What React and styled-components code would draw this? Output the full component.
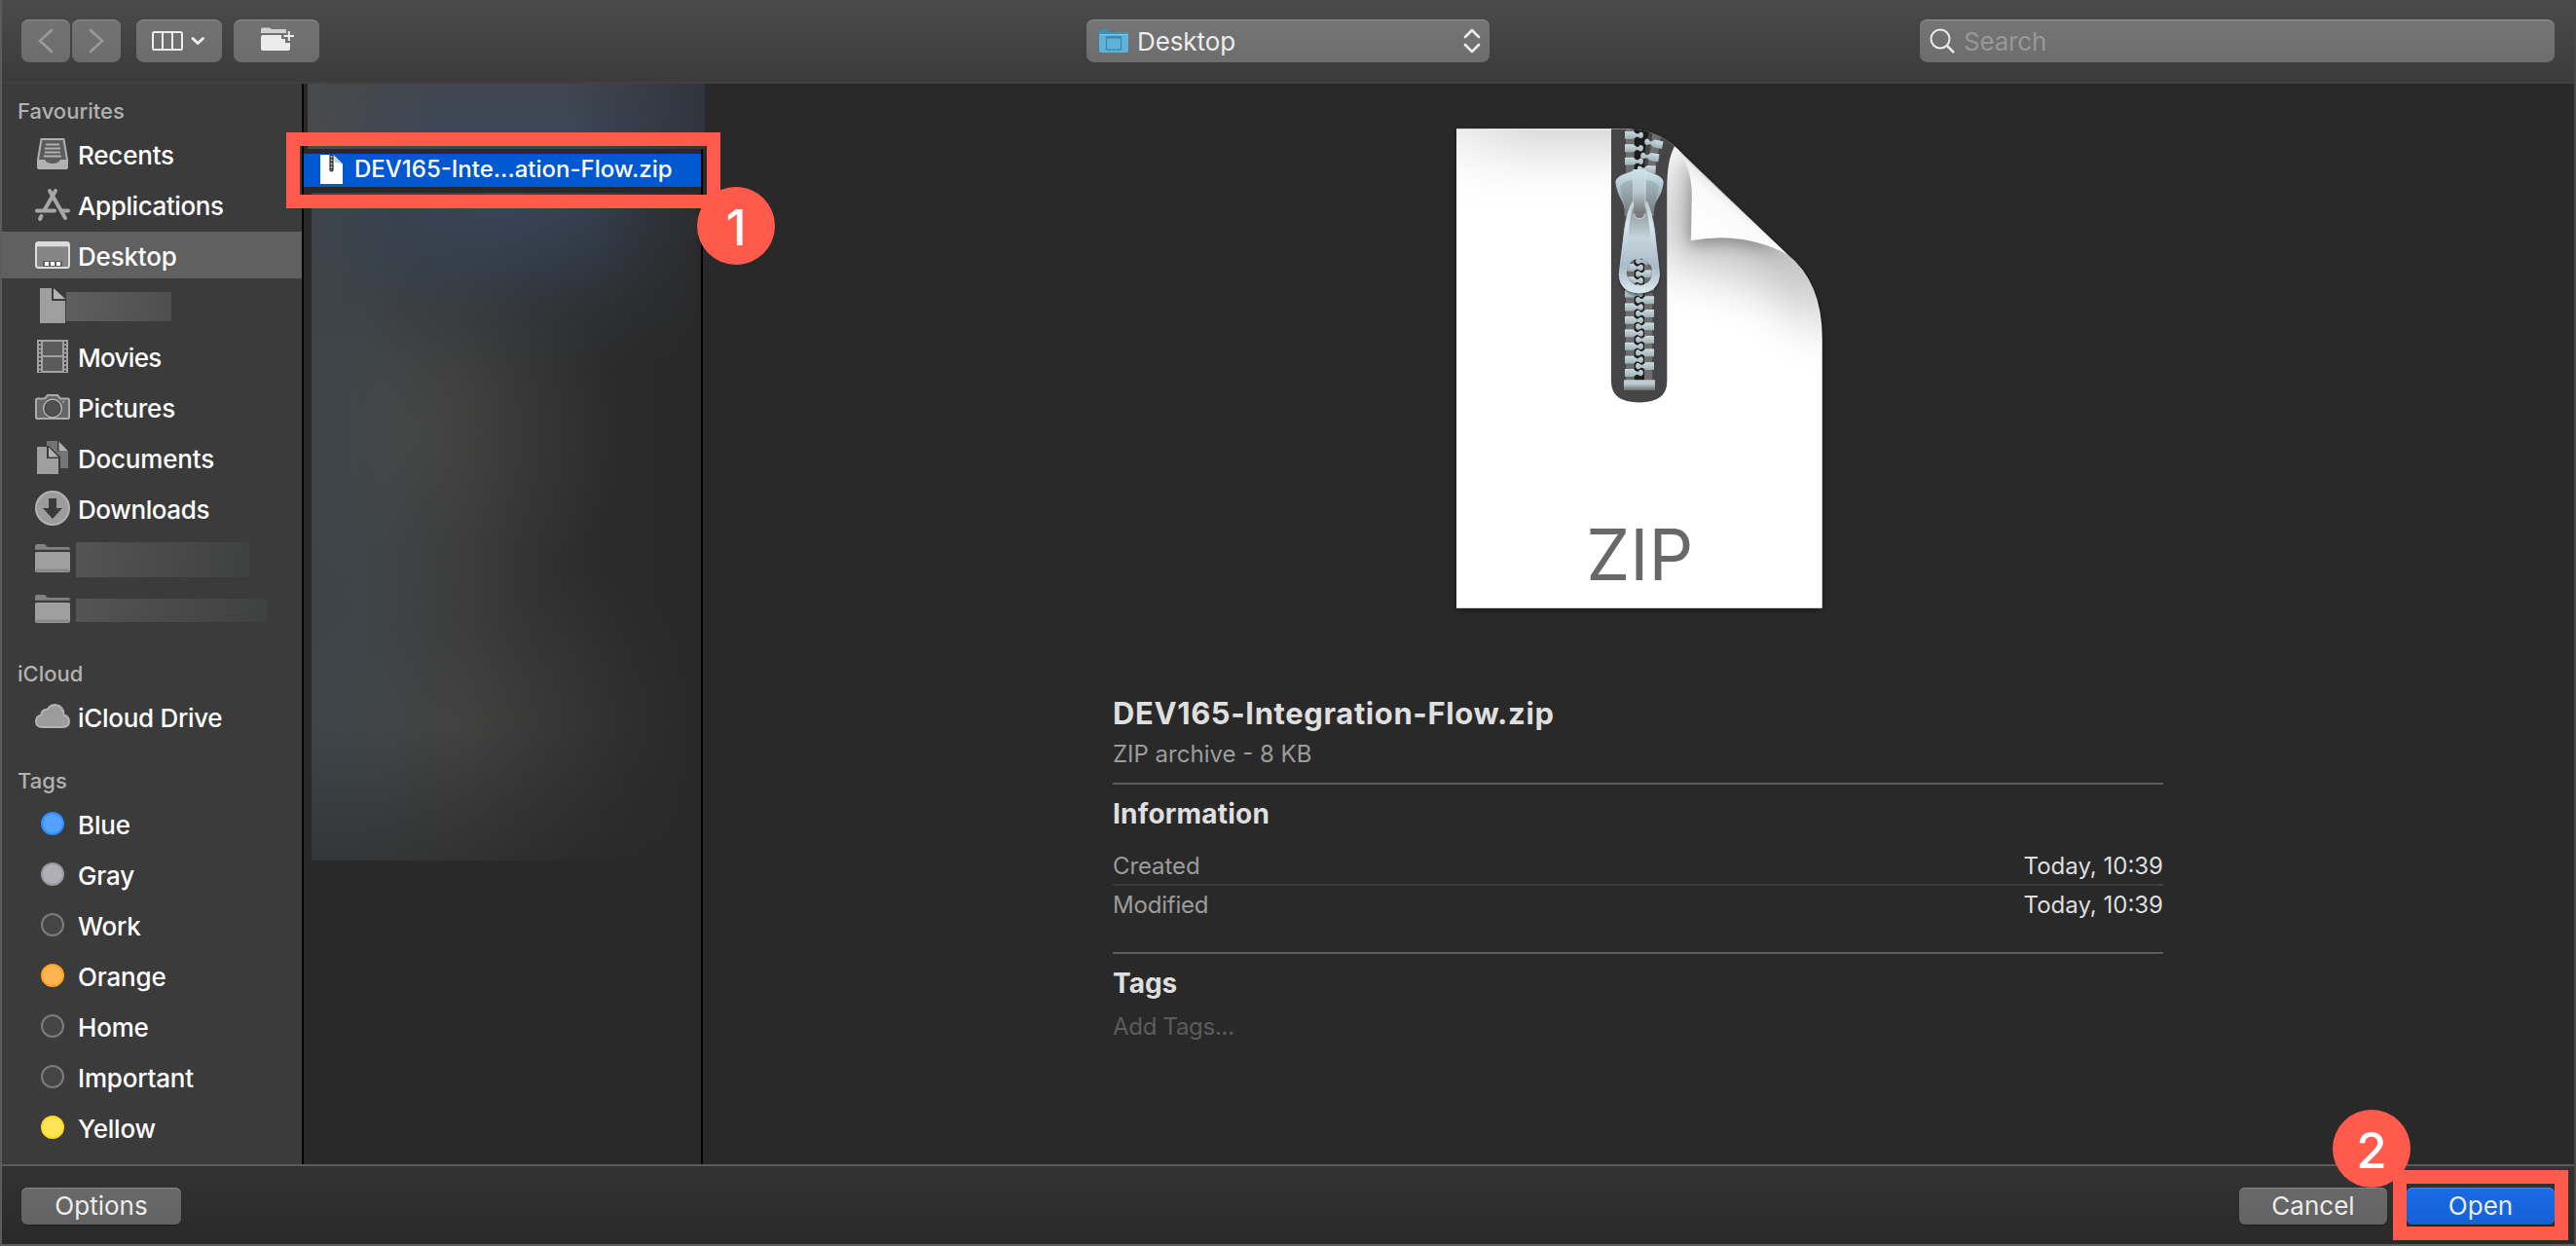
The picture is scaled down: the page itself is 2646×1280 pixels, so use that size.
import React from "react";
import styled, { createGlobalStyle } from "styled-components";

const Global = createGlobalStyle`
  *, *::before, *::after { box-sizing: border-box; }
  body { margin: 0; background: #292929; }
`;

const FONT = '"Inter", "Liberation Sans", sans-serif';

const Dialog = styled.div`
  position: relative;
  width: 2646px;
  height: 1280px;
  overflow: hidden;
  display: flex;
  flex-direction: column;
  background: #292929;
  border: solid #5c5c5c;
  border-width: 0 2px 2px 2px;
  border-right-color: #484848;
  font-family: ${FONT};
  color: #fff;
`;

const Toolbar = styled.header`
  flex: none;
  display: flex;
  height: 86px;
  padding: 20px 20px 20px;
  background: linear-gradient(#4b4b4b, #3b3b3b);
  border-bottom: 2px solid #414141;
`;

const ToolButton = styled.button`
  display: flex;
  align-items: center;
  justify-content: center;
  width: ${(p) => p.$w}px;
  height: 44px;
  margin: 0 ${(p) => p.$gap || 0}px 0 0;
  padding: 0;
  border: 0;
  border-radius: 8px;
  background: linear-gradient(#737373, #6c6c6c);
  box-shadow: inset 0 1px 0 #8a8a8a;
`;

const LocationSelect = styled.div`
  display: flex;
  align-items: center;
  width: 414px;
  height: 44px;
  margin-left: 788px;
  padding: 0 9px 0 13px;
  border-radius: 8px;
  background: linear-gradient(#757575, #6d6d6d);
  box-shadow: inset 0 1px 0 #929292;
`;

const SelectLabel = styled.span`
  flex: 1;
  margin-left: 8px;
  padding-top: 2px;
  font-size: 26px;
  line-height: 42px;
  letter-spacing: -0.1px;
  color: #ececec;
`;

const SearchField = styled.div`
  display: flex;
  align-items: center;
  width: 652px;
  height: 44px;
  margin-left: 442px;
  padding-left: 10px;
  border-radius: 8px;
  background: linear-gradient(#757575, #6d6d6d);
  box-shadow: inset 0 1px 0 #949294;
`;

const Placeholder = styled.span`
  margin-left: 8px;
  padding-top: 2px;
  font-size: 26px;
  line-height: 42px;
  letter-spacing: -0.2px;
  color: #989898;
`;

const Body = styled.main`
  flex: none;
  display: flex;
  height: 1110px;
`;

const Sidebar = styled.nav`
  width: 310px;
  background: #3b3b3b;
  border-right: 2px solid #000;
`;

const SectionTitle = styled.h2`
  display: flex;
  align-items: flex-end;
  height: ${(p) => p.$h}px;
  margin: 0;
  padding: 0 0 5px 16px;
  font-size: 22px;
  line-height: 26px;
  font-weight: 500;
  letter-spacing: ${(p) => p.$ls || 0}px;
  color: #b2b2b2;
`;

const SideRow = styled.div`
  display: flex;
  align-items: center;
  height: 52px;
  padding-left: 34px;
  border: solid transparent;
  border-width: 2px 0;
  background: ${(p) => (p.$on ? "#606060" : "transparent")} padding-box;
`;

const SideSlot = styled.span`
  display: flex;
  flex: none;
  justify-content: center;
  width: 36px;
  height: 36px;
`;

const SideLabel = styled.span`
  margin-left: 8px;
  padding-top: 3px;
  font-size: 26px;
  line-height: 45px;
  font-weight: 500;
  letter-spacing: ${(p) => p.$ls || -0.2}px;
`;

const Redacted = styled.span`
  width: ${(p) => p.$w}px;
  height: ${(p) => p.$h}px;
  margin: 2px 0 0 ${(p) => p.$x}px;
  background: linear-gradient(100deg, ${(p) => p.$from}, ${(p) => p.$to});
`;

const TagDot = styled.span`
  width: 24px;
  height: 24px;
  margin-top: 6px;
  border-radius: 50%;
  background: ${(p) => p.$fill};
  border: 2px solid ${(p) => p.$edge};
`;

const FileColumn = styled.section`
  display: flex;
  flex-direction: column;
  width: 410px;
  border-right: 2px solid #000;
`;

const BlurTop = styled.div`
  flex: none;
  width: 408px;
  height: 67px;
  margin-left: 4px;
  position: relative;
  background:
    linear-gradient(90deg, #484a4c 0%, rgba(72,74,76,0) 35%, rgba(46,48,56,0) 65%, #30343d 100%),
    linear-gradient(#41464f, #3a475b);
`;

const FileRow = styled.div`
  flex: none;
  display: flex;
  align-items: center;
  height: 34px;
  margin: 5px 0 6px;
  padding: 0 0 2px 17px;
  background: #0058d0;
`;

const FileName = styled.span`
  margin-left: 12px;
  font-size: 24px;
  line-height: 32px;
  font-weight: 500;
  white-space: nowrap;
`;

const BlurList = styled.div`
  flex: none;
  width: 396px;
  height: 686px;
  margin-left: 8px;
  background:
    linear-gradient(rgba(41,41,41,0) 80%, rgba(41,41,41,0.5) 100%),
    linear-gradient(90deg, rgba(62,68,74,0.9) 0%, rgba(62,68,74,0) 22%, rgba(41,41,41,0) 75%, rgba(41,41,41,0.55) 100%),
    radial-gradient(ellipse 340px 190px at 50% 0%, rgba(56,72,94,0.95), rgba(54,66,84,0.7) 35%, rgba(50,57,67,0.3) 70%, rgba(48,50,54,0) 100%),
    radial-gradient(ellipse 220px 200px at 26% 36%, rgba(78,78,76,0.5), rgba(78,78,76,0.22) 55%, rgba(78,78,76,0) 100%),
    radial-gradient(ellipse 260px 190px at 38% 80%, rgba(78,78,76,0.42), rgba(78,78,76,0.18) 55%, rgba(78,78,76,0) 100%),
    linear-gradient(90deg, #3d474a 0%, #3c4143 20%, #383938 40%, #303030 58%, #2b2b2b 76%, #292929 100%);
`;

const Preview = styled.section`
  display: flex;
  flex-direction: column;
  flex: 1;
  padding: 24px 422px 0 421px;
`;

const Artwork = styled.svg`
  display: block;
  flex: none;
  width: 440px;
  height: 540px;
  margin-left: 317px;
`;

const FileTitle = styled.h1`
  margin: 63px 0 0;
  font-size: 31px;
  line-height: 40px;
  font-weight: 650;
  letter-spacing: 0.6px;
  color: #dfdfdf;
`;

const Muted = styled.div`
  font-size: 24px;
  line-height: 30px;
  letter-spacing: ${(p) => p.$ls || 0}px;
  margin-top: ${(p) => p.$mt || 0}px;
  color: ${(p) => p.$c || "#9c9c9c"};
`;

const Rule = styled.hr`
  width: 100%;
  height: 2px;
  margin: ${(p) => p.$m};
  border: 0;
  background: ${(p) => p.$c || "#5c5c5c"};
`;

const GroupTitle = styled.h3`
  margin: 0;
  font-size: 28px;
  line-height: 32px;
  font-weight: 700;
  letter-spacing: ${(p) => p.$ls || 0}px;
  color: #dfdfdf;
`;

const InfoRow = styled.div`
  display: flex;
  justify-content: space-between;
  margin-top: ${(p) => p.$mt || 0}px;
  color: #dfdfdf;
  font-size: 24px;
  line-height: 30px;
`;

const Footer = styled.footer`
  flex: 1;
  display: flex;
  align-items: flex-start;
  padding: 22px 20px 0;
  border-top: 2px solid #5a5a5a;
  background: linear-gradient(#333, #292929);
`;

const PushButton = styled.button`
  width: ${(p) => p.$w}px;
  height: 38px;
  margin: 0 0 0 ${(p) => p.$ml || "0"};
  padding: 0;
  border: 0;
  border-radius: 6px;
  font: 400 26px/38px ${FONT};
  color: #ececec;
  background: ${(p) => (p.$primary ? "linear-gradient(#1b6be8, #1560d4)" : "linear-gradient(#696969, #626262)")};
  box-shadow: inset 0 1px 0 ${(p) => (p.$primary ? "#4a8cf0" : "#858585")}, 0 1px 1px rgba(0,0,0,.35);
`;

const Highlight = styled.div`
  position: absolute;
  left: ${(p) => p.$x}px;
  top: ${(p) => p.$y}px;
  width: ${(p) => p.$w}px;
  height: ${(p) => p.$h}px;
  border: 14px solid #ff5a4c;
`;

const Step = styled.div`
  position: absolute;
  left: ${(p) => p.$x}px;
  top: ${(p) => p.$y}px;
  width: 80px;
  height: 80px;
  border-radius: 50%;
  background: #ff5a4c;
  font: 500 51px/83px ${FONT};
  text-align: center;
`;

/* ---- toolbar glyphs ---- */
const Chevron = ({ flip }) => (
  <svg width="50" height="44" fill="none" stroke="#9a9a9a" strokeWidth="2.6" strokeLinecap="round">
    <path d={flip ? "M19 11 L31 22 L19 33" : "M31 11 L19 22 L31 33"} />
  </svg>
);

const ColumnsGlyph = () => (
  <svg width="88" height="44" fill="none" stroke="#ececec">
    <rect x="17" y="13" width="30" height="18" rx="1.5" strokeWidth="2" />
    <path d="M27 13V31M37 13V31" strokeWidth="2" />
    <path d="M58 19.5l5.2 5L68.500 19.500" strokeWidth="3" strokeLinecap="round" strokeLinejoin="round" />
  </svg>
);

const NewFolderGlyph = () => (
  <svg width="88" height="44" fill="#ececec">
    <path d="M28 14V10.500Q28 8.500 30 8.500H36Q38 8.500 39 10H54V14Z" fill="#d2d2d2" />
    <path d="M28 18Q28 16 30 16H49V20H53V24H58V30Q58 32 56 32H30Q28 32 28 30Z" />
    <path d="M56.800 12V22M51.500 17H62" stroke="#ececec" strokeWidth="2" />
  </svg>
);

const BlueFolder = () => (
  <svg width="31" height="26" overflow="visible">
    <path d="M0 8V3Q0 1 2 1H8Q10 1 11 4L28 4Q30 4 30 6V9H0Z" fill="#3f8fb5" />
    <path d="M0 6.500H30V23Q30 25 28 25H2Q0 25 0 23Z" fill="#5fb2d8" />
    <path d="M0 6.500H30" stroke="#7cc9ea" />
    <rect x="7.500" y="9" width="15" height="13" fill="none" stroke="#3a86ad" strokeWidth="1.300" />
    <path d="M7 9.500H23" stroke="#3a86ad" strokeWidth="2" />
  </svg>
);

const UpDown = () => (
  <svg width="18" height="28" fill="none" stroke="#ececec" strokeWidth="2.600" strokeLinecap="round" strokeLinejoin="round">
    <path d="M2 10L9 3L16 10M2 18L9 25L16 18" />
  </svg>
);

const Magnifier = () => (
  <svg width="27" height="28" fill="none" stroke="#ececec">
    <circle cx="11" cy="12" r="9.500" strokeWidth="2" />
    <path d="M17.800 18.800L25 26" strokeWidth="2.600" />
  </svg>
);

/* ---- sidebar glyphs, 36 x 36 ---- */
const Glyph = ({ children }) => (
  <svg width="36" height="36" viewBox="0 0 36 36" fill="none">{children}</svg>
);

const RecentsIcon = () => (
  <Glyph>
    <path d="M6.500 3H29.500L33 24V32Q33 33 32 33H4Q3 33 3 32V24Z" fill="#5c5c5c" stroke="#b0b0b0" strokeWidth="2" strokeLinejoin="round" />
    <path d="M11 8.500H25M10 12.500H26M10 16.500H26M9 20.500H27" stroke="#b0b0b0" strokeWidth="1.800" />
    <path d="M3 24H10Q12 28 18 28Q24 28 26 24H33L33 32Q33 34 31 34H5Q3 34 3 32Z" fill="#b2b2b2" />
  </Glyph>
);

const AppsIcon = () => (
  <Glyph>
    <g stroke="#a6a6a6" strokeWidth="4" strokeLinecap="round">
      <path d="M15 4L31 32" />
      <path d="M21 4L9.500 24" />
      <path d="M2 24.500H20M27 24.500H34" />
      <path d="M6.500 30L5 33" />
    </g>
  </Glyph>
);

const DesktopIcon = () => (
  <Glyph>
    <rect x="1" y="5" width="34" height="26" rx="2.500" fill="#858585" stroke="#dcdcdc" strokeWidth="2" />
    <path d="M2 7.500H34" stroke="#dcdcdc" strokeWidth="3.500" />
    <path d="M8 24H28V30H8Z" fill="#606060" />
    <path d="M10 25H14V29H10ZM16 25H20V29H16ZM22 25H26V29H22Z" fill="#fff" />
  </Glyph>
);

const FileIcon = () => (
  <Glyph>
    <path d="M5 0H17V13H31V36H5Z" fill="#9f9f9f" />
    <path d="M19 0L31 11H19Z" fill="#b4b4b4" />
  </Glyph>
);

const MoviesIcon = () => (
  <Glyph>
    <rect x="2" y="1" width="32" height="34" fill="#a2a2a2" />
    <path d="M8 3H28V17H8ZM8 19H28V33H8Z" fill="#5b5b5b" />
    <path d="M5 3V34M31 3V34" stroke="#3b3b3b" strokeWidth="2" strokeDasharray="2.200 2" />
  </Glyph>
);

const CameraIcon = () => (
  <Glyph>
    <path d="M1 11Q1 9.500 2.500 9.500H10L13 6H23L26 9.500H33.500Q35 9.500 35 11V29Q35 30 34 30H2Q1 30 1 29Z" fill="#666" stroke="#ababab" strokeWidth="2" />
    <circle cx="18" cy="19.500" r="8.500" fill="#505050" stroke="#333" strokeWidth="1.500" />
    <circle cx="18" cy="19.500" r="9.300" stroke="#b5b5b5" strokeWidth="1.500" />
    <circle cx="29" cy="13" r="1" fill="#b5b5b5" />
  </Glyph>
);

const DocumentsIcon = () => (
  <Glyph>
    <path d="M12 1H23V12H34V29H12Z" fill="#747474" />
    <path d="M24.500 1.500L34 11.500H24.500Z" fill="#b0b0b0" />
    <path d="M1 6H14L26 17V36H1Z" fill="#3b3b3b" />
    <path d="M2 7H12V19H24V35H2Z" fill="#9f9f9f" />
    <path d="M14 7.500L24 17.500H14Z" fill="#b4b4b4" />
  </Glyph>
);

const DownloadsIcon = () => (
  <Glyph>
    <circle cx="18" cy="18" r="17" fill="#9c9c9c" stroke="#b2b2b2" strokeWidth="2" />
    <path d="M14 8H22V18H28L18 29L8 18H14Z" fill="#3b3b3b" />
  </Glyph>
);

const FolderIcon = () => (
  <Glyph>
    <path d="M0 9V5Q0 3 2 3H10L13 6H34Q36 6 36 8V10H0Z" fill="#828282" />
    <path d="M0 9.500H36" stroke="#3b3b3b" strokeWidth="1.500" />
    <path d="M0 12Q0 11 2 11H34Q36 11 36 12V30Q36 32 34 32H2Q0 32 0 30Z" fill="#9f9f9f" />
    <path d="M1 30H35" stroke="#888" strokeWidth="3" />
  </Glyph>
);

const CloudIcon = () => (
  <Glyph>
    <path d="M7.500 29Q1 29 1 23Q1 17.500 6.500 16.500Q6.500 10.500 12.500 11Q15.500 6 21 6Q29.500 7 29.500 16.500Q35 18 35 23Q35 29 28.500 29Z" fill="#9c9c9c" stroke="#b2b2b2" strokeWidth="2" />
  </Glyph>
);

const SmallZip = () => (
  <svg width="23" height="30" viewBox="0 0 23 30">
    <path d="M0 0H13.500L23 9.500V30H0Z" fill="#fff" />
    <path d="M13.500 0L23 9.500Q19 7.500 15 8Z" fill="#cfd4da" />
    <path d="M11.500 0V15.500" stroke="#333" strokeWidth="4.200" strokeLinecap="round" />
    <path d="M11.500 1V16" stroke="#aebbc0" strokeWidth="1.800" strokeDasharray="2 1.600" />
  </svg>
);

/* ---- large ZIP document ---- */
const leftTeeth = [84, 123, 162, 479, 518, 557, 597, 636, 675, 714, 754, 793];
const rightTeeth = [459, 498, 537, 576, 616, 655, 694, 733, 773];
const TOOTH = "M-30 -11H-4Q0 -11 3 -6Q8 -3 12 -5Q16 -11 22 -9Q27 -7 27 0Q27 8 21 9Q16 10 12 6Q8 3 3 7Q0 11 -4 11H-30Z";
const SHEET = "M108 65H640Q740 68 808 143L1125 437Q1235 520 1235 690V1495H108Z";
const CURL = "M778 121Q838 170 833 280L831 398Q1000 370 1130 441Z";

const Tooth = ({ x, y, flip, turn = 0 }) => (
  <g transform={`translate(${x} ${y}) rotate(${turn}) scale(${flip ? -1 : 1} 1)`}>
    <path d={TOOTH} fill="url(#tooth)" />
    <path d="M-30 -10.500H-3" stroke="#dcebf0" strokeWidth="2" />
  </g>
);

const Ramp = ({ id, stops }) => (
  <linearGradient id={id} x1="0" y1="0" x2="0" y2="1">
    {stops.map(([at, color]) => <stop key={at} offset={at} stopColor={color} />)}
  </linearGradient>
);

const ZipArtwork = () => (
  <Artwork viewBox="0 0 1320 1568" preserveAspectRatio="none">
    <defs>
      <linearGradient id="sheetTop" x1="0" y1="0" x2="0" y2="1">
        <stop offset="0" stopColor="#dcdcdc" />
        <stop offset=".45" stopColor="#f4f4f4" />
        <stop offset="1" stopColor="#fff" stopOpacity="0" />
      </linearGradient>
      <linearGradient id="fadeLeft" x1="0" y1="0" x2="1" y2="0">
        <stop offset="0" stopColor="#fff" />
        <stop offset="1" stopColor="#fff" stopOpacity="0" />
      </linearGradient>
      <linearGradient id="curl" gradientUnits="userSpaceOnUse" x1="850" y1="390" x2="960" y2="250">
        <stop offset="0" stopColor="#fff" />
        <stop offset=".7" stopColor="#fafafa" />
        <stop offset="1" stopColor="#e2e2e2" />
      </linearGradient>
      <Ramp id="tooth" stops={[[0, "#c9d9df"], [1, "#9fb1b8"]]} />
      <Ramp id="slider" stops={[[0, "#d2e6ee"], [0.45, "#a9bac3"], [1, "#77787a"]]} />
      <Ramp id="loop" stops={[[0, "#cfe2ea"], [0.5, "#b7c7cf"], [1, "#737170"]]} />
      <Ramp id="pull" stops={[[0, "#909698"], [0.3, "#aab6ba"], [0.55, "#c3d4da"], [1, "#b4c3ca"]]} />
      <Ramp id="rim" stops={[[0, "#bccbd1"], [0.25, "#d3e7ef"], [0.7, "#a9bacb"], [1, "#dcebf0"]]} />
      <Ramp id="stopBar" stops={[[0, "#c3d2d8"], [0.4, "#b9c6cb"], [1, "#6f6e6b"]]} />
      <clipPath id="sheetClip"><path d={SHEET} /></clipPath>
      <clipPath id="rightClip">
        <path d="M778 121Q757 160 757 240V900H1235V690Q1235 520 1125 437L808 143Z" />
      </clipPath>
      <filter id="shadow" x="-10%" y="-10%" width="120%" height="120%">
        <feDropShadow dx="0" dy="6" stdDeviation="10" floodColor="#000" floodOpacity=".45" />
      </filter>
      <filter id="soft" x="-60%" y="-60%" width="220%" height="260%"><feGaussianBlur stdDeviation="24" /></filter>
      <filter id="wide" x="-80%" y="-80%" width="260%" height="300%"><feGaussianBlur stdDeviation="75" /></filter>
      <filter id="near" x="-30%" y="-30%" width="160%" height="160%"><feGaussianBlur stdDeviation="5" /></filter>
    </defs>

    <path d={SHEET} fill="#fff" filter="url(#shadow)" />
    <g clipPath="url(#sheetClip)">
      <rect x="108" y="65" width="480" height="250" fill="url(#sheetTop)" />
      <rect x="108" y="69" width="230" height="250" fill="url(#fadeLeft)" opacity=".5" />
      <path d="M585 60H800L778 121Q757 160 757 240V818Q757 881 671 881Q585 881 585 818Z" fill="#454547" />
    </g>
    <g clipPath="url(#rightClip)">
      <path d="M740 100L740 420Q1000 400 1280 640V300Z" fill="#000" opacity=".24" filter="url(#wide)" transform="translate(0 50)" />
      <path d={CURL} fill="#000" opacity=".34" filter="url(#soft)" transform="translate(-4 12)" />
    </g>
    <path d={CURL} fill="url(#curl)" />
    <path d="M108 67H585" stroke="#fff" strokeWidth="3" />

    <g clipPath="url(#sheetClip)">
      <path d="M630 66H655V815H630Z" fill="#6f6d6b" />
      <path d="M687 460H712V815H687ZM694 200L715 60L738 90L718 200Z" fill="#6f6d6b" />
      <path d="M655 66H705Q680 130 690 200H687V815H657V66Z" fill="#1d1d1d" />
      {leftTeeth.map((y) => <Tooth key={y} x={657} y={y} />)}
      {rightTeeth.map((y) => <Tooth key={y} x={687} y={y} flip />)}
      <Tooth x={714} y={108} flip turn={12} />
      <Tooth x={702} y={148} flip turn={8} />
      <Tooth x={692} y={186} flip turn={3} />
    </g>
    <rect x="624" y="814" width="96" height="31" rx="3" fill="url(#stopBar)" />

    <path d="M609 500Q611 560 672 562Q731 560 734 500L719 380H625Z M672 451A41 41 0 1 0 672 533A41 41 0 1 0 672 451Z" fillRule="evenodd" fill="#000" opacity=".55" filter="url(#near)" />
    <path d="M598 222Q602 206 630 198Q672 180 714 198Q742 206 746 222Q746 250 722 285Q716 300 716 325H626Q628 300 620 285Q600 250 598 222Z" fill="url(#slider)" />
    <path d="M612 236Q632 216 652 219V285L630 322Q628 296 622 280ZM732 236Q712 216 692 219V285L714 322Q716 296 722 280Z" fill="#6c757c" opacity=".28" />
    <path fillRule="evenodd" d="M650 284H696Q712 320 719 370L734 500Q731 553 672 555Q611 553 609 500L625 370Q632 315 650 284ZM672 451A41 41 0 1 0 672 533A41 41 0 1 0 672 451Z" fill="url(#rim)" stroke="#d3e0e5" strokeWidth="2" />
    <path d="M652 300H692Q700 330 704 370L716 460Q700 444 672 444Q644 444 626 460L639 370Q643 325 652 300Z" fill="url(#pull)" />
    <path d="M656 320A16 13 0 0 0 688 320" fill="#777" stroke="#ccd9de" strokeWidth="3" />
    <path d="M652 186H691V316Q672 326 654 316Z" fill="url(#loop)" />
    <path d="M653 188V300M690 188V300" stroke="#dcebf0" strokeWidth="2" opacity=".7" />

    <text x="508" y="1411" fontFamily="Inter, sans-serif" fontSize="212" fontWeight="380" fill="#686868" textLength="330" lengthAdjust="spacingAndGlyphs">ZIP</text>
  </Artwork>
);

const favourites = [
  { icon: <RecentsIcon />, label: "Recents" },
  { icon: <AppsIcon />, label: "Applications", ls: -0.4 },
  { icon: <DesktopIcon />, label: "Desktop", on: true },
  { icon: <FileIcon />, bar: { $w: 108, $h: 30, $x: -4, $from: "#5f5f5f", $to: "#4e4e4e" } },
  { icon: <MoviesIcon />, label: "Movies", ls: -0.7 },
  { icon: <CameraIcon />, label: "Pictures" },
  { icon: <DocumentsIcon />, label: "Documents" },
  { icon: <DownloadsIcon />, label: "Downloads", ls: -0.4 },
  { icon: <FolderIcon />, bar: { $w: 178, $h: 36, $x: 6, $from: "#545454", $to: "#3f4040" } },
  { icon: <FolderIcon />, bar: { $w: 196, $h: 24, $x: 6, $from: "#545454", $to: "#3f4040" } },
];

const tags = [
  { label: "Blue", fill: "#54a2ff", edge: "#2b8dff" },
  { label: "Gray", fill: "#b0afb5", edge: "#9b9aa0" },
  { label: "Work", fill: "#454545", edge: "#7c7c7c" },
  { label: "Orange", fill: "#ffb452", edge: "#ffa21f" },
  { label: "Home", fill: "#454545", edge: "#7c7c7c" },
  { label: "Important", fill: "#454545", edge: "#7c7c7c" },
  { label: "Yellow", fill: "#ffe455", edge: "#ffdc1f" },
];

export default function App() {
  return (
    <Dialog>
      <Global />
      <Toolbar>
        <ToolButton $w={50} $gap={2}><Chevron /></ToolButton>
        <ToolButton $w={50} $gap={16}><Chevron flip /></ToolButton>
        <ToolButton $w={88} $gap={12}><ColumnsGlyph /></ToolButton>
        <ToolButton $w={88}><NewFolderGlyph /></ToolButton>
        <LocationSelect>
          <BlueFolder />
          <SelectLabel>Desktop</SelectLabel>
          <UpDown />
        </LocationSelect>
        <SearchField>
          <Magnifier />
          <Placeholder>Search</Placeholder>
        </SearchField>
      </Toolbar>
      <Body>
        <Sidebar>
          <SectionTitle $h={46}>Favourites</SectionTitle>
          {favourites.map((f, i) => (
            <SideRow key={i} $on={f.on}>
              <SideSlot>{f.icon}</SideSlot>
              {f.label ? <SideLabel $ls={f.ls}>{f.label}</SideLabel> : <Redacted {...f.bar} />}
            </SideRow>
          ))}
          <SectionTitle $h={58}>iCloud</SectionTitle>
          <SideRow>
            <SideSlot><CloudIcon /></SideSlot>
            <SideLabel $ls={-0.3}>iCloud Drive</SideLabel>
          </SideRow>
          <SectionTitle $h={58}>Tags</SectionTitle>
          {tags.map((t) => (
            <SideRow key={t.label}>
              <SideSlot><TagDot $fill={t.fill} $edge={t.edge} /></SideSlot>
              <SideLabel>{t.label}</SideLabel>
            </SideRow>
          ))}
        </Sidebar>
        <FileColumn>
          <BlurTop />
          <FileRow>
            <SmallZip />
            <FileName>DEV165-Inte...ation-Flow.zip</FileName>
          </FileRow>
          <BlurList />
        </FileColumn>
        <Preview>
          <ZipArtwork />
          <FileTitle>DEV165-Integration-Flow.zip</FileTitle>
          <Muted $mt={7}>ZIP archive - 8 KB</Muted>
          <Rule $m="14px 0 14px" />
          <GroupTitle $ls={0.2}>Information</GroupTitle>
          <InfoRow $mt={23}><Muted $ls={-0.1}>Created</Muted><span>Today, 10:39</span></InfoRow>
          <Rule $c="#3d3d3d" $m="3px 0 5px" />
          <InfoRow><Muted $ls={-0.2}>Modified</Muted><span>Today, 10:39</span></InfoRow>
          <Rule $m="33px 0 14px" />
          <GroupTitle>Tags</GroupTitle>
          <Muted $mt={14} $ls={-0.3} $c="#5c5c5c">Add Tags...</Muted>
        </Preview>
      </Body>
      <Footer>
        <PushButton $w={164}>Options</PushButton>
        <PushButton $w={152} $ml="auto">Cancel</PushButton>
        <PushButton $w={152} $ml="20px" $primary>Open</PushButton>
      </Footer>
      <Highlight $x={292} $y={136} $w={446} $h={78} />
      <Step $x={714} $y={192}>1</Step>
      <Highlight $x={2456} $y={1202} $w={180} $h={72} />
      <Step $x={2394} $y={1140}>2</Step>
    </Dialog>
  );
}
